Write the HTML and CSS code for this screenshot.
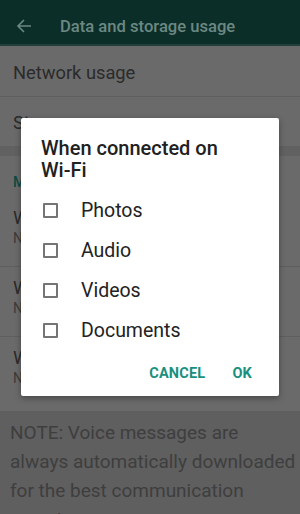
FILE: index.html
```html
<!DOCTYPE html>
<html>
<head>
<meta charset="utf-8">
<link rel="stylesheet" href="styles.css">
</head>
<body>
<div class="screen">
  <header class="toolbar">
    <svg class="back" width="16" height="16" viewBox="0 0 16 16"><path d="M15 8H2M8 2L2 8l6 6" fill="none" stroke="currentColor" stroke-width="1.6"/></svg>
    <span class="title">Data and storage usage</span>
  </header>
  <div class="row single">Network usage</div>
  <div class="row single last">Storage usage</div>
  <div class="band"></div>
  <div class="section">Media auto-download</div>
  <div class="row double"><div class="t">When using mobile data</div><div class="s">No media</div></div>
  <div class="row double"><div class="t">When connected on Wi-Fi</div><div class="s">No media</div></div>
  <div class="row double last"><div class="t">When roaming</div><div class="s">No media</div></div>
  <p class="note">NOTE: Voice messages are always automatically downloaded for the best communication experience.</p>

  <div class="dialog">
    <h2 class="dtitle">When connected on Wi-Fi</h2>
    <ul class="opts">
      <li><span class="cb"></span>Photos</li>
      <li><span class="cb"></span>Audio</li>
      <li><span class="cb"></span>Videos</li>
      <li><span class="cb"></span>Documents</li>
    </ul>
    <div class="actions"><span>CANCEL</span><span>OK</span></div>
  </div>
</div>
</body>
</html>
```
FILE: styles.css
```css
html, body { margin: 0; padding: 0; }
body { font-family: Roboto, "Noto Sans", sans-serif; background: #6a6a6a; }
.screen { position: relative; width: 300px; height: 514px; overflow: hidden; background: #6a6a6a; }
.toolbar { height: 46px; box-sizing: border-box; padding-top: 8px; background: #0b2e28; border-bottom: 2px solid #243f3a; display: flex; align-items: center; color: #6c8883; }
.back { margin-left: 16px; width: 16px; height: 16px; }
.title { margin-left: 28px; font-size: 16.6px; font-weight: 500; }
.row { border-bottom: 1px solid #5f5f5f; padding-left: 13px; color: #2b2b2b; }
.row.last { border-bottom: none; }
.single { height: 50px; line-height: 54px; font-size: 18.3px; }
.single.last { height: 49px; line-height: 51px; }
.band { height: 10px; background: #616161; }
.section { padding: 18px 0 7px 13px; line-height: 16px; color: #0c4a40; font-size: 14px; font-weight: 500; }
.double { height: 70px; box-sizing: border-box; padding-top: 10px; }
.double .t { font-size: 18.3px; line-height: 22px; }
.double .s { font-size: 14px; line-height: 18px; color: #3a3a3a; }
.note { margin: 4px 0 0; padding: 7px 2px 0 10px; font-size: 19px; line-height: 29px; color: #3e3e3e; background: #5f5f5f; height: 200px; }

.dialog { position: absolute; left: 21px; top: 118px; width: 258px; height: 278px; background: #fff; border-radius: 2px; box-shadow: 0 2px 6px rgba(0,0,0,0.35); box-sizing: border-box; }
.dtitle { margin: 0; padding: 19px 50px 0 20px; font-size: 20px; line-height: 22px; font-weight: 500; color: #212121; }
.opts { list-style: none; margin: 9px 0 0; padding: 0; }
.opts li { height: 40px; display: flex; align-items: center; font-size: 19.5px; color: #222; }
.cb { width: 11px; height: 11px; border: 2px solid #757575; border-radius: 1px; margin-left: 22px; margin-right: 23px; }
.actions { display: flex; justify-content: flex-end; gap: 27px; padding: 15px 27px 0 0; font-size: 14.5px; font-weight: 700; color: #19907f; letter-spacing: 0.2px; }
```
